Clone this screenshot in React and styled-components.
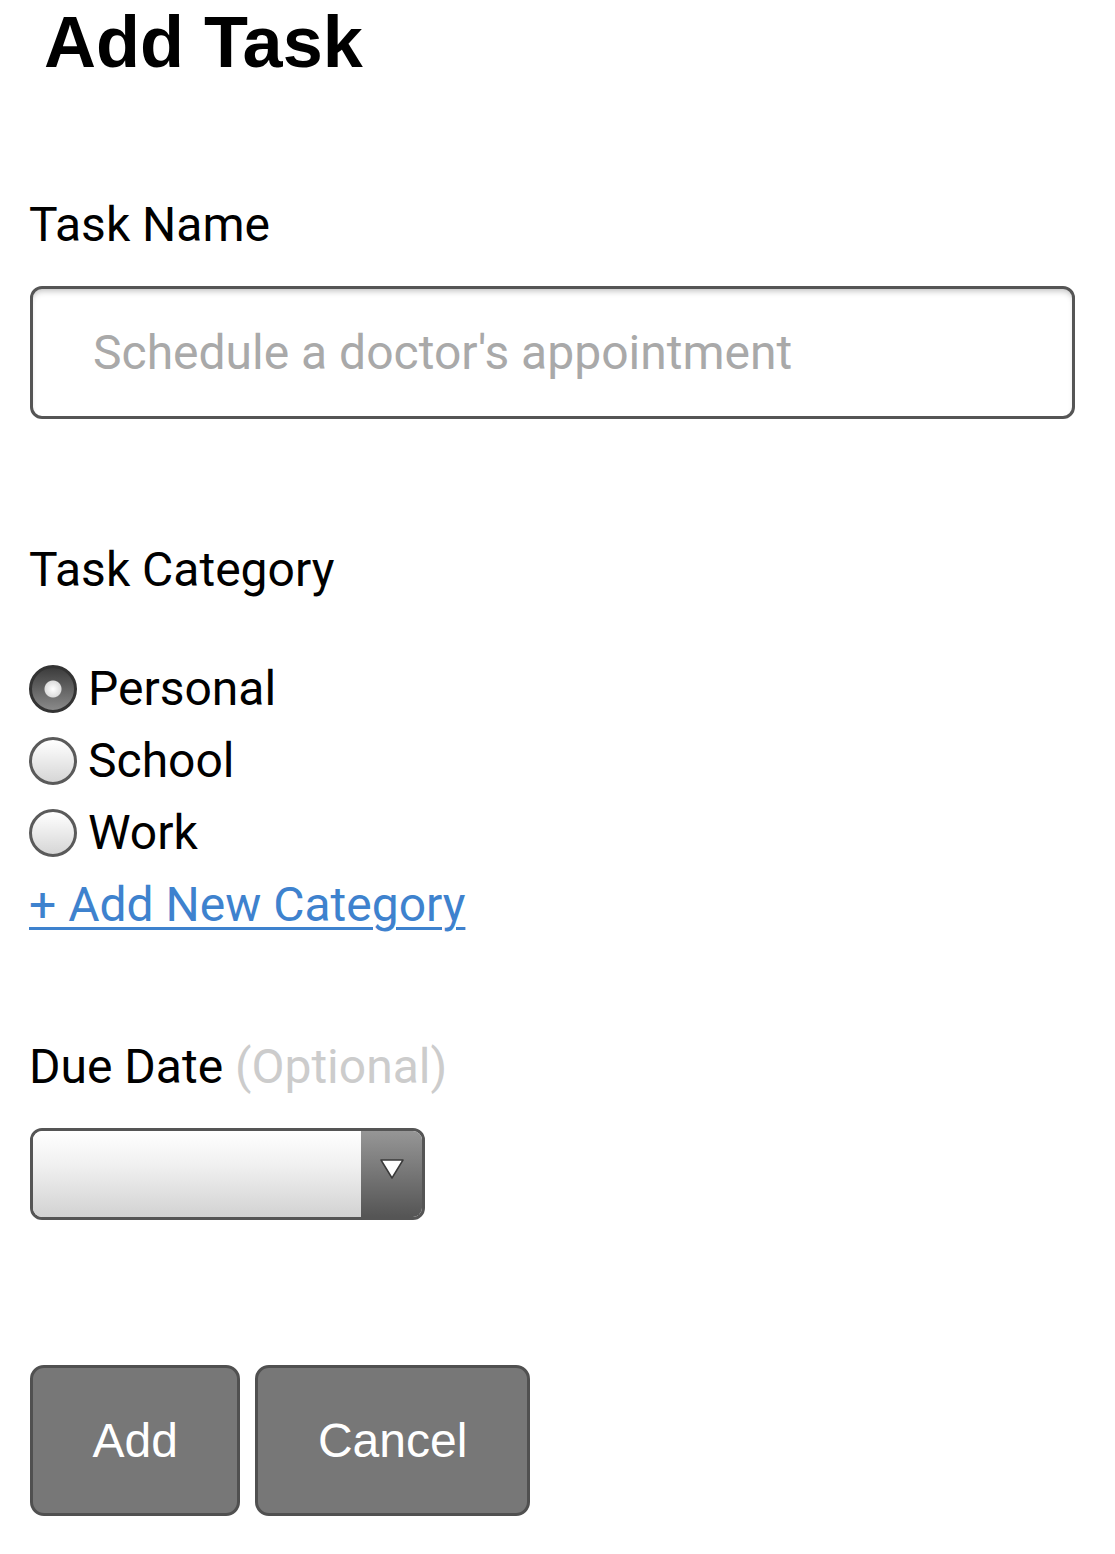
import React, { useState } from "react";
import styled, { createGlobalStyle } from "styled-components";

const GlobalStyle = createGlobalStyle`
  html, body {
    margin: 0;
    padding: 0;
    background: #ffffff;
  }
  body {
    font-family: Roboto, "Noto Sans", sans-serif;
    color: #000;
  }
`;

const categories = ["Personal", "School", "Work"];

const App = () => {
  const [category, setCategory] = useState("Personal");
  const [name, setName] = useState("");

  return (
    <>
      <GlobalStyle />
      <Page>
        <Heading>Add Task</Heading>

        <Label htmlFor="task-name" $top={113}>
          Task Name
        </Label>
        <TextInput
          id="task-name"
          value={name}
          onChange={(e) => setName(e.target.value)}
          placeholder="Schedule a doctor's appointment"
        />

        <Label as="div" $top={123}>
          Task Category
        </Label>
        <RadioList>
          {categories.map((c) => (
            <RadioRow key={c} onClick={() => setCategory(c)}>
              <Radio $checked={category === c} />
              {c}
            </RadioRow>
          ))}
          <AddLink href="#" onClick={(e) => e.preventDefault()}>
            + Add New Category
          </AddLink>
        </RadioList>

        <Label as="div" $top={98}>
          Due Date <Muted>(Optional)</Muted>
        </Label>
        <DateSelect>
          <SelectBody />
          <SelectArrow>
            <svg width="26" height="24" viewBox="0 0 26 24">
              <polygon
                points="2,3 24,3 13,21"
                fill="#ffffff"
                stroke="#3a3a3a"
                strokeWidth="1.5"
                strokeLinejoin="round"
              />
            </svg>
          </SelectArrow>
        </DateSelect>

        <Buttons>
          <Button>Add</Button>
          <Button>Cancel</Button>
        </Buttons>
      </Page>
    </>
  );
};

const Page = styled.div`
  display: flex;
  flex-direction: column;
  align-items: flex-start;
  padding: 0 40px 40px 29px;
`;

const Heading = styled.h1`
  margin: 0 0 0 15px;
  font-family: "Liberation Sans", Arial, sans-serif;
  font-weight: 700;
  font-size: 72px;
  line-height: 84px;
`;

const Label = styled.label`
  display: block;
  margin-top: ${(props) => props.$top}px;
  font-size: 48px;
  line-height: 56px;
  color: #000;
`;

const Muted = styled.span`
  color: #cccccc;
`;

const TextInput = styled.input`
  box-sizing: border-box;
  align-self: stretch;
  margin: 33px 0 0 1px;
  height: 133px;
  padding: 0 60px;
  border: 3px solid #555555;
  border-radius: 12px;
  background: #ffffff;
  box-shadow: inset 0 5px 6px -3px rgba(0, 0, 0, 0.25);
  font-family: Roboto, sans-serif;
  font-size: 48px;
  color: #000;
  outline: none;

  &::placeholder {
    color: #a9a9a9;
  }
`;

const RadioList = styled.div`
  display: flex;
  flex-direction: column;
  align-items: flex-start;
  margin-top: 55px;
`;

const RadioRow = styled.label`
  display: flex;
  align-items: center;
  height: 72px;
  font-size: 48px;
  line-height: 72px;
  cursor: pointer;
`;

const Radio = styled.span`
  box-sizing: border-box;
  width: 48px;
  height: 48px;
  margin-right: 11px;
  border-radius: 50%;
  border: 3px solid ${(props) => (props.$checked ? "#333333" : "#5a5a5a")};
  background: ${(props) =>
    props.$checked
      ? "radial-gradient(circle at 50% 50%, #ffffff 0, #dddddd 8px, transparent 9px), linear-gradient(#3c3c3c, #8a8a8a)"
      : "linear-gradient(#ffffff, #d6d6d6)"};
  flex-shrink: 0;
`;

const AddLink = styled.a`
  display: block;
  height: 72px;
  font-size: 48px;
  line-height: 72px;
  color: #3e82ce;
  text-decoration: underline;
  text-decoration-thickness: 3px;
  text-underline-offset: 6px;
`;

const DateSelect = styled.div`
  box-sizing: border-box;
  display: flex;
  width: 395px;
  height: 92px;
  margin: 33px 0 0 1px;
  border: 3px solid #555555;
  border-radius: 12px;
  overflow: hidden;
`;

const SelectBody = styled.div`
  flex: 1;
  background: linear-gradient(#ffffff, #f0f0f0 40%, #d2d2d2);
`;

const SelectArrow = styled.div`
  display: flex;
  justify-content: center;
  align-items: flex-start;
  padding-top: 26px;
  width: 61px;
  background: linear-gradient(#969696, #555555);
`;

const Buttons = styled.div`
  display: flex;
  gap: 15px;
  margin: 145px 0 0 1px;
`;

const Button = styled.button`
  box-sizing: border-box;
  height: 151px;
  padding: 0 59.5px;
  border: 3px solid #505050;
  border-radius: 14px;
  background: #777777;
  color: #ffffff;
  font-family: "Liberation Sans", Arial, sans-serif;
  font-size: 48px;
  cursor: pointer;
`;

export default App;
